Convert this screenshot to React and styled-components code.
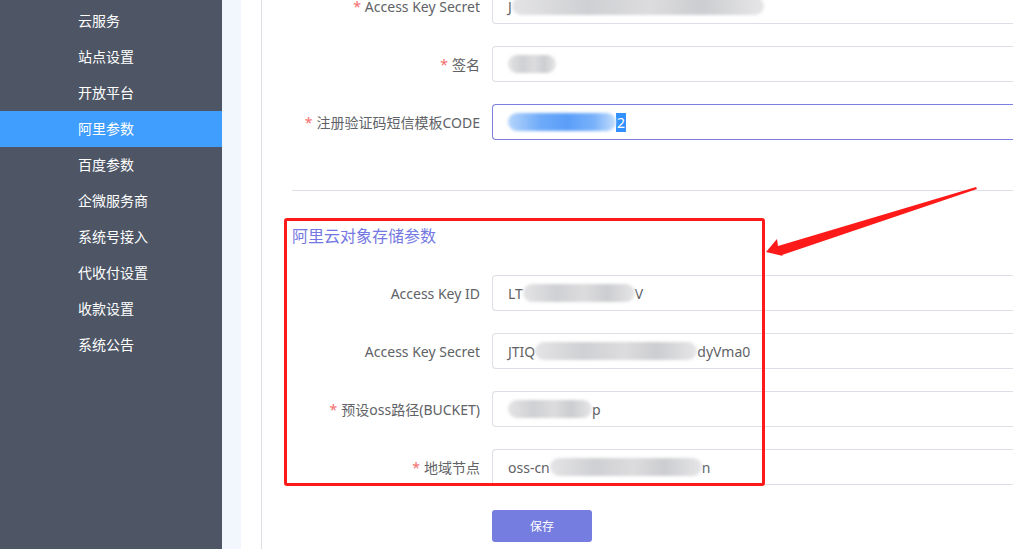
import React from 'react';
import styled, { createGlobalStyle } from 'styled-components';

const GlobalStyle = createGlobalStyle`
  html, body {
    margin: 0;
    padding: 0;
    height: 100%;
    overflow: hidden;
    font-family: "Noto Sans", "Noto Sans CJK SC", sans-serif;
  }
  #root {
    height: 100%;
  }
`;

const menu = [
  '云服务',
  '站点设置',
  '开放平台',
  '阿里参数',
  '百度参数',
  '企微服务商',
  '系统号接入',
  '代收付设置',
  '收款设置',
  '系统公告',
];

const Blur = ({ w, tone }) => <BlurBlock style={{ width: w }} $tone={tone} />;

const Field = ({ label, required, focused, children }) => (
  <FormItem>
    <Label>
      {required && <Star>*</Star>}
      {label}
    </Label>
    <Input $focused={focused}>{children}</Input>
  </FormItem>
);

export default function App() {
  return (
    <Layout>
      <GlobalStyle />
      <Sidebar>
        {menu.map((item) => (
          <MenuItem key={item} $active={item === '阿里参数'}>
            {item}
          </MenuItem>
        ))}
      </Sidebar>
      <Main>
        <Panel>
          <Card>
            <Form>
              <Field label="Access Key Secret" required>
                J<Blur w={252} />
              </Field>
              <Field label="签名" required>
                <Blur w={48} />
              </Field>
              <Field label="注册验证码短信模板CODE" required focused>
                <Blur w={108} tone="blue" />
                <Selected>2</Selected>
              </Field>
            </Form>
            <Divider />
            <Section>
              <SectionTitle>阿里云对象存储参数</SectionTitle>
              <Field label="Access Key ID">
                LT<Blur w={112} />V
              </Field>
              <Field label="Access Key Secret">
                JTIQ<Blur w={162} />dyVma0
              </Field>
              <Field label="预设oss路径(BUCKET)" required>
                <Blur w={84} />p
              </Field>
              <Field label="地域节点" required>
                oss-cn<Blur w={152} />n
              </Field>
              <Highlight />
              <Arrow viewBox="0 0 220 75" width="220" height="75">
                <polygon
                  points="1,66 12,53 13,60 211,1 212,3 17,69 18,70"
                  fill="#ff1a1a"
                />
              </Arrow>
            </Section>
            <Actions>
              <SaveButton>保存</SaveButton>
            </Actions>
          </Card>
        </Panel>
      </Main>
    </Layout>
  );
}

const Layout = styled.div`
  display: flex;
  height: 549px;
  width: 1013px;
  overflow: hidden;
`;

const Sidebar = styled.nav`
  width: 222px;
  flex-shrink: 0;
  background: #4e5666;
  padding-top: 3px;
  box-sizing: border-box;
`;

const MenuItem = styled.div`
  height: 36px;
  line-height: 36px;
  padding-left: 78px;
  font-size: 14px;
  color: #ffffff;
  background: ${(p) => (p.$active ? '#409eff' : 'transparent')};
`;

const Main = styled.main`
  flex: 1;
  display: flex;
  padding-left: 19px;
  background: linear-gradient(to right, #f2f6fd, #e9eef8);
`;

const Panel = styled.div`
  flex: 1;
  background: #fff;
  padding-left: 20px;
`;

const Card = styled.div`
  display: flow-root;
  height: 100%;
  border-left: 1px solid #dcdfe6;
  padding-left: 30px;
  box-sizing: border-box;
`;

const Form = styled.div`
  margin-top: -12px;
`;

const FormItem = styled.div`
  display: flex;
  align-items: center;
  margin-bottom: 22px;
`;

const Label = styled.label`
  width: 200px;
  flex-shrink: 0;
  box-sizing: border-box;
  padding-right: 12px;
  text-align: right;
  font-size: 14px;
  color: #606266;
  white-space: nowrap;
`;

const Star = styled.span`
  color: #f56c6c;
  margin-right: 4px;
`;

const Input = styled.div`
  flex: 1;
  height: 36px;
  box-sizing: border-box;
  border: 1px solid ${(p) => (p.$focused ? '#7b7fe0' : '#dcdfe6')};
  border-right: none;
  border-radius: 4px 0 0 4px;
  padding-left: 15px;
  display: flex;
  align-items: center;
  font-size: 14px;
  color: #606266;
  white-space: nowrap;
`;

const BlurBlock = styled.span`
  display: inline-block;
  height: 18px;
  border-radius: 9px;
  background: ${(p) =>
    p.$tone === 'blue'
      ? 'linear-gradient(to right, #b6d5fb, #6eaaf9 30%, #5a9ef9 55%, #7ab2fa 80%, #c4defc)'
      : 'linear-gradient(to right, #e4e4e6, #cfd0d3 30%, #dcdcde 55%, #cccdd0 75%, #e6e6e8)'};
  filter: blur(1.5px);
`;

const Selected = styled.span`
  background: #3390ff;
  color: #fff;
  padding: 0 1px;
`;

const Divider = styled.div`
  height: 1px;
  background: #dcdfe6;
  margin: 50px 0 0;
`;

const Section = styled.section`
  position: relative;
  padding-top: 33px;
`;

const SectionTitle = styled.h3`
  margin: 0 0 27px;
  font-size: 16px;
  line-height: 24px;
  font-weight: normal;
  color: #7478e2;
`;

const Highlight = styled.div`
  position: absolute;
  left: -8px;
  top: 27px;
  width: 481px;
  height: 268px;
  box-sizing: border-box;
  border: 3px solid #ff1a1a;
  border-radius: 3px;
  pointer-events: none;
`;

const Arrow = styled.svg`
  position: absolute;
  left: 473px;
  top: -5px;
  pointer-events: none;
`;

const Actions = styled.div`
  padding-left: 200px;
  margin-top: 25px;
`;

const SaveButton = styled.button`
  width: 100px;
  height: 32px;
  border: none;
  border-radius: 3px;
  background: #767de0;
  color: #fff;
  font-size: 12px;
  font-family: inherit;
`;
